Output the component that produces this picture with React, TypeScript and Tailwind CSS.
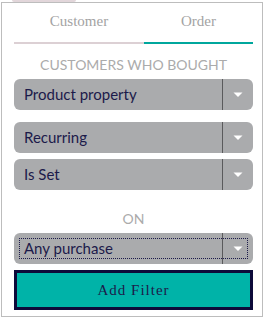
import { useState } from 'react'

const serif = "font-['Liberation_Serif','DejaVu_Serif',serif]"
const sans = "font-['Lato','Noto_Sans',sans-serif]"

interface SelectBoxProps {
  label: string
  focused?: boolean
  className?: string
}

function SelectBox({ label, focused, className = '' }: SelectBoxProps) {
  return (
    <div className={`relative flex h-[31px] items-center rounded-[6px] bg-[#aaabad] ${className}`}>
      <span
        className={`${sans} ml-[5px] flex h-[21px] w-[229px] items-center pl-[4px] text-[15px] text-[#1c1a4a] ${
          focused ? 'border border-dotted border-[#1c1a4a]' : 'border border-transparent'
        }`}
      >
        {label}
      </span>
      <div className="absolute left-[208px] top-0 h-full w-px bg-[#5a5a5c]" />
      <svg className="absolute left-[219px] top-[13px]" width="10" height="6" viewBox="0 0 10 6">
        <path d="M0.5 0.5 L9.5 0.5 L5 5 Z" fill="#ffffff" />
      </svg>
    </div>
  )
}

export default function App() {
  const [tab, setTab] = useState<'customer' | 'order'>('order')

  return (
    <div className="relative h-[319px] w-[267px] bg-white">
      <div className="absolute left-[12px] top-0 h-[2px] w-[64px] rounded-b bg-[#e2d6da]" />
      <div className="absolute left-[1px] top-[2px] flex h-[315px] w-[262px] flex-col border border-[#bdbdbd] bg-white pl-[12px] pr-[9px]">
        {/* Tabs */}
        <div className="mt-[4px] flex">
          <button
            onClick={() => setTab('customer')}
            className={`${serif} h-[37px] w-[130px] border-b-2 pb-[6px] text-[15px] text-[#a3a3a3] ${
              tab === 'customer' ? 'border-[#00a79d]' : 'border-[#dcd0d4]'
            }`}
          >
            Customer
          </button>
          <button
            onClick={() => setTab('order')}
            className={`${serif} h-[37px] w-[109px] border-b-2 pb-[6px] text-[15px] text-[#a3a3a3] ${
              tab === 'order' ? 'border-[#00a79d]' : 'border-[#dcd0d4]'
            }`}
          >
            Order
          </button>
        </div>

        <p className={`${sans} mt-[12px] text-center text-[14px] leading-[18px] text-[#ababab]`}>
          CUSTOMERS WHO BOUGHT
        </p>

        <SelectBox label="Product property" className="mt-[5px]" />
        <SelectBox label="Recurring" className="mt-[12px]" />
        <SelectBox label="Is Set" className="mt-[6px]" />

        <p className={`${sans} mt-[20px] text-center text-[14px] leading-[18px] text-[#ababab]`}>ON</p>

        <SelectBox label="Any purchase" focused className="mt-[5px]" />

        <button
          className={`${serif} mt-[6px] h-[40px] w-[239px] border-[3px] border-[#0d0a3a] bg-[#00b3a8] text-[15px] tracking-[1px] text-[#1c1a4a]`}
        >
          Add Filter
        </button>
      </div>
    </div>
  )
}
